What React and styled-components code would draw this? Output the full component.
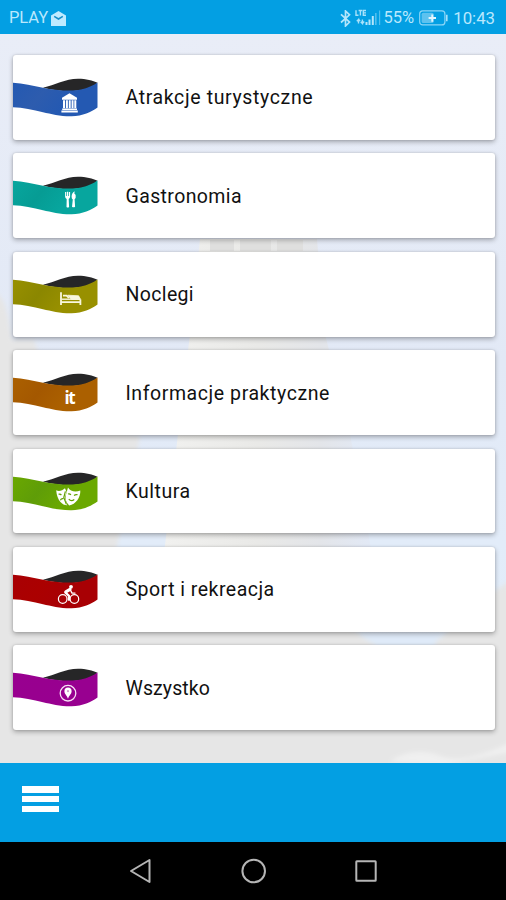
import styled, { createGlobalStyle } from "styled-components";

const categories = [
  { id: "attractions", name: "Atrakcje turystyczne", from: "#2d5cae", to: "#2459b2", Icon: MuseumIcon, spacing: 0.63 },
  { id: "food", name: "Gastronomia", from: "#069c94", to: "#07a69e", Icon: CutleryIcon, spacing: 0.38 },
  { id: "beds", name: "Noclegi", from: "#8b8700", to: "#989000", Icon: BedIcon, spacing: 0.35 },
  { id: "info", name: "Informacje praktyczne", from: "#a45800", to: "#ab6000", Icon: InfoIcon, spacing: 0.57 },
  { id: "culture", name: "Kultura", from: "#5f9d08", to: "#6aa800", Icon: MasksIcon, spacing: 0.52 },
  { id: "sport", name: "Sport i rekreacja", from: "#ab0000", to: "#a80004", Icon: BikeIcon, spacing: 0.48 },
  { id: "all", name: "Wszystko", from: "#98008f", to: "#980090", Icon: PinIcon, spacing: 0.1 },
];

export default function App() {
  return (
    <Screen>
      <GlobalStyle />
      <StatusBar />

      <Content>
        <Backdrop />
        <List>
          {categories.map((c) => (
            <Card key={c.id}>
              <Ribbon category={c} />
              <CardTitle $spacing={c.spacing}>{c.name}</CardTitle>
            </Card>
          ))}
        </List>
      </Content>

      <BottomBar>
        <MenuButton aria-label="Menu">
          <MenuLine />
          <MenuLine />
          <MenuLine />
        </MenuButton>
      </BottomBar>

      <SystemNav />
    </Screen>
  );
}

/* ================= STATUS BAR ================= */
function StatusBar() {
  return (
    <StatusRow>
      <Carrier>PLAY</Carrier>
      <MailIcon viewBox="0 0 15 15" width="15" height="15">
        <path d="M7.5 0 15 4.5V15H0V4.5Z" fill="#bfeaff" />
        <path d="M3.2 5.4 7.5 8l4.3-2.6" fill="none" stroke="#168fc9" strokeWidth="1.5" />
      </MailIcon>
      <Spacer />
      <BluetoothIcon viewBox="0 0 11 17" width="11" height="17">
        <path
          d="M1 4.3 9.5 12 5.5 16V1l4 3.8L1 12.5"
          fill="none"
          stroke="#b4e5fb"
          strokeWidth="1.7"
        />
      </BluetoothIcon>
      <SignalIcon viewBox="0 0 27 18" width="27" height="18">
        <g fill="none" stroke="#a9e1fa" strokeWidth="1.4">
          <path d="M1 1.2v5h2.5M3.6 1.5h3.6M5.4 1.5v5M11 1.5H8.3v4.8H11M8.3 3.9H11" />
          <path d="M3.5 14.5v-4L1.8 12.2M3.5 10.2l1.6 1.8M7.4 10.5v4l-1.7-1.8M7.4 14.5l1.8-1.9" />
        </g>
        <g fill="#b4e5fb">
          <rect x="10.5" y="13" width="2" height="3" />
          <rect x="13.5" y="10.5" width="2" height="5.5" />
          <rect x="16.8" y="7" width="2" height="9" />
        </g>
        <g fill="#52bfee">
          <rect x="20" y="4" width="1.6" height="12" />
          <rect x="24" y="1.5" width="1.2" height="14.5" />
        </g>
      </SignalIcon>
      <Percent>55%</Percent>
      <BatteryIcon viewBox="0 0 29 16" width="29" height="16">
        <rect x="0.7" y="0.9" width="25.2" height="14" rx="3" fill="none" stroke="#8cd6f7" strokeWidth="1.2" />
        <rect x="2.6" y="2.8" width="12" height="10.2" rx="1.5" fill="#5dc2ef" />
        <path d="M13.3 4.4v7.4M9.6 8.1H17" stroke="#e2f6ff" strokeWidth="2" />
        <path d="M27.8 4.8v6.4" stroke="#a9e1fa" strokeWidth="1.6" />
      </BatteryIcon>
      <Clock>10:43</Clock>
    </StatusRow>
  );
}

/* ================= BACKDROP ================= */
function Backdrop() {
  return (
    <BackdropSvg viewBox="0 0 506 729" preserveAspectRatio="none">
      <defs>
        <linearGradient id="sky" x1="0" y1="0" x2="0" y2="1">
          <stop offset="0" stopColor="#e9edf7" />
          <stop offset="0.45" stopColor="#e2e9f6" />
          <stop offset="0.78" stopColor="#e2edfa" />
          <stop offset="1" stopColor="#e4eaf2" />
        </linearGradient>
        <linearGradient id="tower" x1="0" y1="0" x2="1" y2="0">
          <stop offset="0" stopColor="#f1f1ef" />
          <stop offset="0.45" stopColor="#e9e9e7" />
          <stop offset="0.75" stopColor="#e3e5e9" />
          <stop offset="1" stopColor="#e2e9f6" />
        </linearGradient>
        <filter id="soft" x="-10%" y="-10%" width="120%" height="120%">
          <feGaussianBlur stdDeviation="2" />
        </filter>
      </defs>
      <rect width="506" height="729" fill="url(#sky)" />
      <g filter="url(#soft)">
        <path d="M-8 256C6 262 8 280 12 306H34L60 385L140 402L118 508L100 580H-8Z" fill="#e6e6e6" />
        <path d="M-8 575C120 562 230 590 345 592L372 605H440L460 585 490 560 520 540V740H-8Z" fill="#e6e6e6" />
        <path d="M358 600H440L434 613H378Z" fill="#dfeaf8" />
        <path d="M390 727Q415 712 440 722T520 704V716L440 732Z" fill="#f0f0f0" />
      </g>
      <path d="M200 205H317L325 300 350 400 372 520H164L178 400 190 300Z" fill="url(#tower)" />
      <g fill="#dfdfde">
        <rect x="210" y="206" width="24" height="11" />
        <rect x="240" y="206" width="31" height="11" />
        <rect x="277" y="206" width="26" height="11" />
      </g>
    </BackdropSvg>
  );
}

/* ================= RIBBON ================= */
function Ribbon({ category }) {
  const { id, from, to, Icon } = category;
  return (
    <RibbonSvg viewBox="0 0 85 39" width="85" height="39">
      <defs>
        <linearGradient id={`ribbon-${id}`} x1="0" y1="0" x2="1" y2="0.3">
          <stop offset="0" stopColor={to} />
          <stop offset="0.4" stopColor={from} />
          <stop offset="0.75" stopColor={to} />
        </linearGradient>
      </defs>
      <path d="M30 9.7C42 7 52 .7 65 .7 73 .7 80 2.5 84.5 4.8 75 14.5 52 15 30 9.7Z" fill="#262627" />
      <path
        d="M0 4.8C10 5 20 8.3 30 9.7 42 12.3 58 13.7 68 11.5 75 10 80 7.5 84.5 4.5V29.5C78 34 70 38 58.5 38.3 48 38.5 38 36 30 34.2 20 32 10 29.5 0 29.3Z"
        fill={`url(#ribbon-${id})`}
      />
      <Icon />
    </RibbonSvg>
  );
}

/* ================= RIBBON ICONS ================= */
function MuseumIcon() {
  return (
    <g fill="#fff">
      <path d="M56.5 15.3 64 19.8V21.7H49V19.8Z" />
      <path d="M50 22.3h2.1v8H50zM53 22.3h1.9v8H53zM55.8 22.3h1.9v8h-1.9zM58.6 22.3h1.9v8h-1.9zM61.3 22.3h2v8h-2z" />
      <path d="M49.2 30.6H64v1.5H49.2zM48.4 32.6h16.4v2H48.4z" />
    </g>
  );
}

function CutleryIcon() {
  return (
    <g fill="#fff">
      <path d="M52.1 16h1.2v4h.7v-4.2h1.2V20h.7v-4h1.2v4.5q0 1.9-1.4 2.4l.4 8q-1.4 1-2.6 0l.2-8q-1.6-.6-1.6-2.4Z" />
      <path d="M61.6 15.2Q58.6 17 58.6 20.8q0 2.2 1.2 2.7l-.8 7.2q1.6 1.2 3.1 0l-.5-7.5q1.5-1.4 1.1-3.8-.3-1.3-1.3-1.6Z" />
    </g>
  );
}

function BedIcon() {
  return (
    <g fill="none" stroke="#f9f7df">
      <path d="M48 17.3V30M48 27.2H67.4M67.4 30V24.4" strokeWidth="1.8" />
      <path d="M48.8 24.2H67" strokeWidth="1.4" />
      <path d="M50 20.6h3.5l2.4 2.4" strokeWidth="1.7" />
      <path d="M54.6 20.2 65.6 20.8 67.6 24.4H58.5Z" fill="#f9f7df" strokeWidth="0.8" />
    </g>
  );
}

function InfoIcon() {
  return <InfoText x="51.6" y="31" textLength="11">it</InfoText>;
}

function MasksIcon() {
  return (
    <g>
      <path
        d="M43.2 18.2C46 19.8 49.5 18.5 52 16.2L53.5 20 51.8 25.5 54.2 33.2C50 33.4 44 29 43.2 18.2Z"
        fill="#fff"
      />
      <path
        d="M55 15.5C57.2 19.6 62.5 20.6 67.3 18.6C67.8 25.2 62.6 32.8 56.2 33.4C53 30.5 51.8 26.8 52.9 23Z"
        fill="#fff"
      />
      <path
        d="M45.6 22.4q1.5-.8 2.8.6M47.4 28.2q.8-2 2.9-1.6M55 22q1.7-.7 2.9.9M61 23.5q1.8-1.4 3.6-.7M55.8 27.2q2.3 2.7 5.5.4M52.4 19.4 50.8 25.5 53.4 32.4"
        fill="none"
        stroke="#61a000"
        strokeWidth="1.2"
      />
    </g>
  );
}

function BikeIcon() {
  return (
    <g fill="none" stroke="#fff" strokeLinecap="round" strokeLinejoin="round">
      <circle cx="49.7" cy="29" r="4.3" strokeWidth="1.2" />
      <circle cx="61.4" cy="29" r="4.3" strokeWidth="1.2" />
      <path d="M52.8 21.8 57 19.4" strokeWidth="3.2" />
      <path d="M57.5 20.2 59 23.1H62" strokeWidth="1.4" />
      <path d="M52.5 22.7 56 25.8V29.8" strokeWidth="2.3" />
      <circle cx="58" cy="16.8" r="1.9" fill="#fff" stroke="none" />
    </g>
  );
}

function PinIcon() {
  return (
    <g>
      <circle cx="55" cy="25.2" r="7.8" fill="none" stroke="#f6dff4" strokeWidth="1.3" />
      <path d="M55 30.8C54 27.4 51.4 26 51.4 23.2a3.6 3.6 0 0 1 7.2 0C58.6 26 56 27.4 55 30.8Z" fill="#fff" />
      <circle cx="55" cy="23.2" r="1.1" fill="#cf9bcb" />
    </g>
  );
}

/* ================= SYSTEM NAV ================= */
function SystemNav() {
  return (
    <NavRow>
      <svg viewBox="0 0 24 26" width="24" height="26">
        <path d="M21.5 2V24L3 13Z" fill="none" stroke="#b5b5b5" strokeWidth="2" strokeLinejoin="round" />
      </svg>
      <svg viewBox="0 0 26 26" width="26" height="26">
        <circle cx="13.7" cy="13" r="11.3" fill="none" stroke="#b5b5b5" strokeWidth="2" />
      </svg>
      <svg viewBox="0 0 24 26" width="24" height="26">
        <rect x="2.3" y="3.3" width="19.4" height="19.4" rx="0.5" fill="none" stroke="#b5b5b5" strokeWidth="2" />
      </svg>
    </NavRow>
  );
}

/* ================= STYLED COMPONENTS ================= */
const GlobalStyle = createGlobalStyle`
  * {
    box-sizing: border-box;
  }

  body {
    margin: 0;
    font-family: Roboto, "Liberation Sans", sans-serif;
  }
`;

const Screen = styled.div`
  height: 900px;
  display: flex;
  flex-direction: column;
  overflow: hidden;
`;

const StatusRow = styled.header`
  height: 34px;
  flex-shrink: 0;
  display: flex;
  align-items: center;
  padding: 2px 11px 0 9px;
  background: #039fe3;
  color: #b9e8fd;
  line-height: 1;
`;

const Carrier = styled.span`
  font-size: 16.5px;
  letter-spacing: -0.1px;
`;

const MailIcon = styled.svg`
  margin-left: 3px;
`;

const Spacer = styled.div`
  flex: 1;
`;

const BluetoothIcon = styled.svg`
  margin-right: 4px;
`;

const SignalIcon = styled.svg`
  margin-right: 2px;
`;

const Percent = styled.span`
  font-size: 16.5px;
`;

const BatteryIcon = styled.svg`
  margin: 0 5px 0 5px;
`;

const Clock = styled.span`
  font-size: 16.8px;
`;

const Content = styled.main`
  position: relative;
  height: 729px;
  flex-shrink: 0;
`;

const BackdropSvg = styled.svg`
  position: absolute;
  inset: 0;
  width: 100%;
  height: 100%;
`;

const List = styled.div`
  position: relative;
  display: flex;
  flex-direction: column;
  gap: 13.5px;
  padding: 21px 11.5px 0 13px;
`;

const Card = styled.div`
  height: 84.9px;
  display: flex;
  align-items: center;
  background: #fff;
  border-radius: 3px;
  box-shadow: 0 2px 5px rgba(0, 0, 0, 0.3), 0 0 2px rgba(0, 0, 0, 0.16);
`;

const RibbonSvg = styled.svg`
  flex-shrink: 0;
  margin-right: 27.5px;
`;

const InfoText = styled.text`
  font-family: "Open Sans", sans-serif;
  font-size: 17px;
  font-weight: 700;
  fill: #fff;
`;

const CardTitle = styled.span`
  padding-top: 2px;
  font-size: 19.5px;
  line-height: 24px;
  letter-spacing: ${(props) => props.$spacing}px;
  color: #111;
`;

const BottomBar = styled.footer`
  height: 79px;
  flex-shrink: 0;
  display: flex;
  align-items: flex-start;
  padding: 23px 22px;
  background: #039fe3;
`;

const MenuButton = styled.button`
  width: 36.5px;
  display: flex;
  flex-direction: column;
  gap: 3.2px;
  padding: 0;
  border: none;
  background: none;
`;

const MenuLine = styled.span`
  height: 6.6px;
  background: #fff;
`;

const NavRow = styled.nav`
  height: 58px;
  flex-shrink: 0;
  display: flex;
  justify-content: center;
  align-items: center;
  gap: 88px;
  background: #000;
`;
